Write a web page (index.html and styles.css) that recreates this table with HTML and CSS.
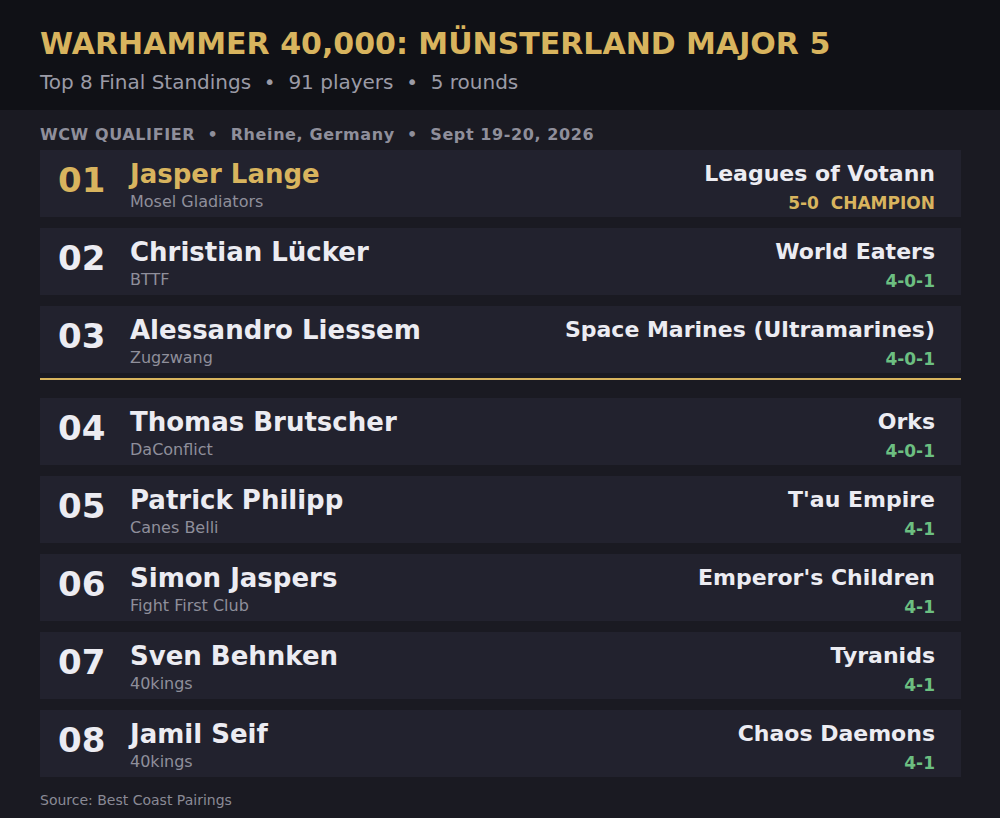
FILE: index.html
```html
<!DOCTYPE html>
<html>
<head>
<meta charset="utf-8">
<link rel="stylesheet" href="styles.css">
</head>
<body>
<header class="top">
  <h1 class="title">WARHAMMER 40,000: MÜNSTERLAND MAJOR 5</h1>
  <div class="subtitle">Top 8 Final Standings &nbsp;•&nbsp; 91 players &nbsp;•&nbsp; 5 rounds</div>
</header>
<main class="main">
  <div class="meta">WCW QUALIFIER &nbsp;•&nbsp; Rheine, Germany &nbsp;•&nbsp; Sept 19-20, 2026</div>
  <div class="list">
    <div class="row champ">
      <div class="rank">01</div>
      <div class="who"><div class="name">Jasper Lange</div><div class="team">Mosel Gladiators</div></div>
      <div class="army"><div class="faction">Leagues of Votann</div><div class="rec gold">5-0&nbsp; CHAMPION</div></div>
    </div>
    <div class="row">
      <div class="rank">02</div>
      <div class="who"><div class="name">Christian Lücker</div><div class="team">BTTF</div></div>
      <div class="army"><div class="faction">World Eaters</div><div class="rec">4-0-1</div></div>
    </div>
    <div class="row">
      <div class="rank">03</div>
      <div class="who"><div class="name">Alessandro Liessem</div><div class="team">Zugzwang</div></div>
      <div class="army"><div class="faction">Space Marines (Ultramarines)</div><div class="rec">4-0-1</div></div>
    </div>
    <div class="divider"></div>
    <div class="row">
      <div class="rank">04</div>
      <div class="who"><div class="name">Thomas Brutscher</div><div class="team">DaConflict</div></div>
      <div class="army"><div class="faction">Orks</div><div class="rec">4-0-1</div></div>
    </div>
    <div class="row">
      <div class="rank">05</div>
      <div class="who"><div class="name">Patrick Philipp</div><div class="team">Canes Belli</div></div>
      <div class="army"><div class="faction">T'au Empire</div><div class="rec">4-1</div></div>
    </div>
    <div class="row">
      <div class="rank">06</div>
      <div class="who"><div class="name">Simon Jaspers</div><div class="team">Fight First Club</div></div>
      <div class="army"><div class="faction">Emperor's Children</div><div class="rec">4-1</div></div>
    </div>
    <div class="row">
      <div class="rank">07</div>
      <div class="who"><div class="name">Sven Behnken</div><div class="team">40kings</div></div>
      <div class="army"><div class="faction">Tyranids</div><div class="rec">4-1</div></div>
    </div>
    <div class="row">
      <div class="rank">08</div>
      <div class="who"><div class="name">Jamil Seif</div><div class="team">40kings</div></div>
      <div class="army"><div class="faction">Chaos Daemons</div><div class="rec">4-1</div></div>
    </div>
  </div>
  <div class="source">Source: Best Coast Pairings</div>
</main>
</body>
</html>
```
FILE: styles.css
```css
* { box-sizing: border-box; }
html, body { margin: 0; padding: 0; }
body {
  width: 1000px;
  height: 818px;
  background: #1a1a22;
  font-family: "DejaVu Sans", sans-serif;
  color: #ececf2;
  overflow: hidden;
}
.top {
  background: #101116;
  height: 110px;
  padding: 27px 40px 0;
}
.title {
  margin: 0;
  font-size: 30px;
  font-weight: bold;
  color: #d8b45e;
  line-height: 34px;
}
.subtitle {
  margin-top: 9px;
  font-size: 20px;
  color: #9b9ba6;
  line-height: 24px;
}
.main {
  padding: 15px 39px 0 40px;
}
.meta {
  font-size: 16px;
  font-weight: bold;
  color: #8f8f9b;
  line-height: 20px;
  letter-spacing: 0.6px;
  margin-bottom: 5px;
}
.list {
  display: flex;
  flex-direction: column;
  gap: 11px;
}
.row {
  height: 67px;
  background: #22222e;
  display: flex;
  align-items: flex-start;
  padding: 9px 26px 0 18px;
}
.rank {
  width: 72px;
  font-size: 34px;
  font-weight: bold;
  line-height: 40px;
  color: #ececf2;
  margin-top: 1px;
}
.who { flex: 1; }
.name {
  font-size: 26px;
  font-weight: bold;
  line-height: 30px;
  color: #ececf2;
}
.team {
  font-size: 16px;
  color: #8f8f9b;
  line-height: 20px;
  margin-top: 3px;
}
.army {
  text-align: right;
  padding-top: 2px;
}
.faction {
  font-size: 22px;
  font-weight: bold;
  line-height: 26px;
  color: #ececf2;
}
.rec {
  font-size: 17px;
  font-weight: bold;
  color: #6cbf81;
  line-height: 20px;
  margin-top: 6px;
}
.rec.gold { color: #d8b45e; }
.champ .rank, .champ .name { color: #d8b45e; }
.divider {
  height: 2px;
  background: #d8b45e;
  margin: -6px 0 7px;
}
.source {
  margin-top: 14px;
  font-size: 14px;
  line-height: 18px;
  color: #8a8a96;
}
```
